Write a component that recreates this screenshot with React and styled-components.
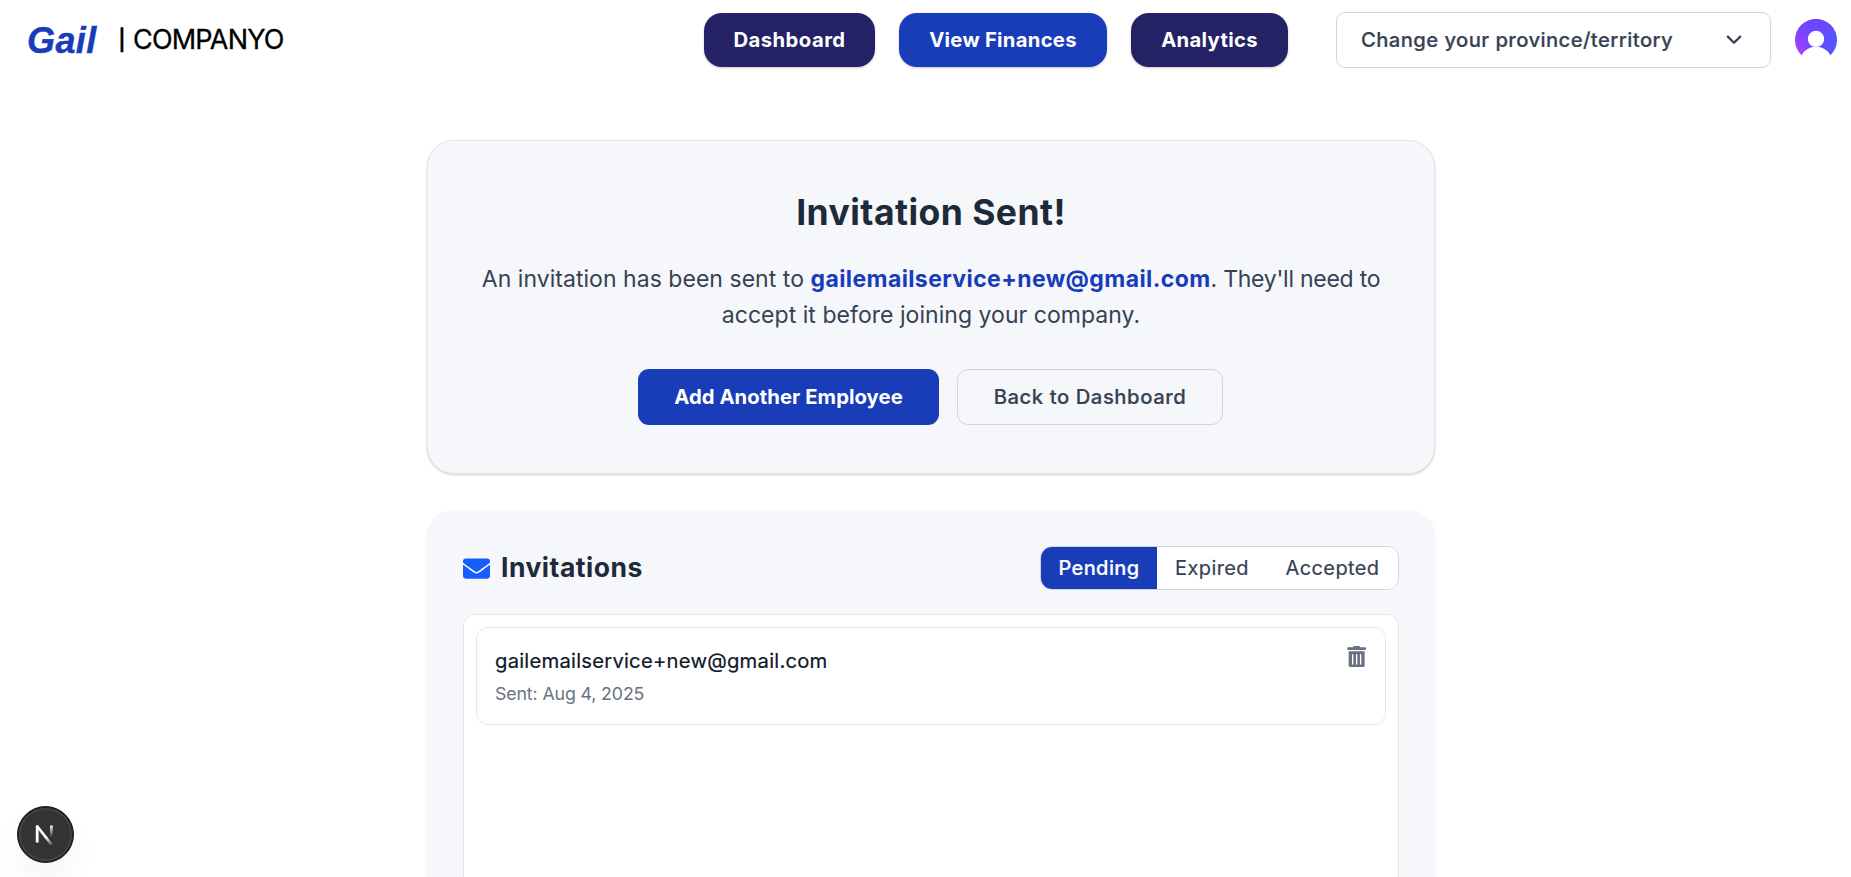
import React, { useState } from "react";
import styled, { createGlobalStyle } from "styled-components";
import { FaEnvelope, FaTrashAlt } from "react-icons/fa";

const GlobalStyle = createGlobalStyle`
  *, *::before, *::after { box-sizing: border-box; }
  html, body { margin: 0; height: 877px; overflow: hidden; background: #ffffff; }
  body { font-family: Inter, "Liberation Sans", sans-serif; color: #1e2939; }
  button { font-family: inherit; margin: 0; cursor: pointer; }
`;

const Page = styled.div`
  height: 877px;
  overflow: hidden;
`;

const Header = styled.header`
  display: flex;
  align-items: center;
  height: 80px;
  padding: 0 14px 0 27px;
`;

const Brand = styled.div`
  display: flex;
  align-items: center;
  flex: 1;
`;

const Logo = styled.span`
  width: 90px;
  padding-top: 1px;
  font: italic 700 36px/40px "Liberation Sans", sans-serif;
  letter-spacing: 0.4px;
  color: #193cb8;
  -webkit-text-stroke: 0.4px #193cb8;
`;

const Company = styled.span`
  display: flex;
  align-items: center;
  gap: 7px;
  font-size: 27px;
  line-height: 40px;
  letter-spacing: -0.8px;
  color: #000000;
  -webkit-text-stroke: 0.3px #000000;
`;

const Divider = styled.span`
  width: 9px;
  font-size: 20.5px;
  font-weight: 600;
  line-height: 40px;
  text-align: center;
`;

const Nav = styled.nav`
  display: flex;
  gap: 24px;
  margin-right: 48px;
`;

const NavButton = styled.button`
  width: ${(p) => p.$width}px;
  height: 54px;
  padding: 0 0 2px;
  border: 0;
  border-radius: 18px;
  background: ${(p) => (p.$active ? "#193cb8" : "#242165")};
  color: #ffffff;
  font-size: 20.25px;
  font-weight: 700;
  letter-spacing: ${(p) => p.$spacing}px;
  white-space: nowrap;
  box-shadow: 0 1px 3px rgba(0, 0, 0, 0.12), 0 1px 2px rgba(0, 0, 0, 0.1);
`;

const ProvinceSelect = styled.button`
  display: flex;
  align-items: center;
  justify-content: space-between;
  width: 435px;
  height: 56px;
  margin-right: 24px;
  padding: 0 28px 2px 24px;
  border: 1px solid #d1d5dc;
  border-radius: 9px;
  background: #ffffff;
  color: #364153;
  font-size: 20.25px;
  font-weight: 500;
  letter-spacing: 0.41px;
  -webkit-text-stroke: 0.2px #364153;
`;

const Avatar = styled.svg`
  display: block;
  width: 42px;
  height: 42px;
`;

const Main = styled.main`
  display: flex;
  flex-direction: column;
  gap: 36px;
  width: 1008px;
  margin: 60px 0 0 427px;
`;

const ConfirmationCard = styled.section`
  height: 334px;
  padding: 55px 53px 0;
  border: 1px solid #e5e7eb;
  border-radius: 27px;
  background: #f5f7fb;
  text-align: center;
  box-shadow: 0 1px 3px rgba(0, 0, 0, 0.1), 0 1px 2px rgba(0, 0, 0, 0.1);
`;

const Title = styled.h1`
  margin: 0 0 31px;
  font-size: 35.5px;
  font-weight: 700;
  line-height: 34px;
  letter-spacing: 0.45px;
`;

const Message = styled.p`
  margin: 0 -10px 36px;
  color: #364153;
  font-size: 23px;
  line-height: 36px;
  letter-spacing: 0.04px;
`;

const Recipient = styled.strong`
  color: #193cb8;
  font-weight: 700;
  letter-spacing: 0.39px;
`;

const Tail = styled.span`
  letter-spacing: -0.25px;
`;

const Actions = styled.div`
  display: flex;
  justify-content: center;
  gap: 18px;
  margin-right: 2px;
`;

const ActionButton = styled.button`
  width: ${(p) => (p.$primary ? 301 : 266)}px;
  height: 56px;
  padding: 0 0 1px 1px;
  border: ${(p) => (p.$primary ? "0" : "1px solid #d1d5dc")};
  border-radius: 11px;
  background: ${(p) => (p.$primary ? "#193cb8" : "transparent")};
  color: ${(p) => (p.$primary ? "#ffffff" : "#364153")};
  font-size: 20.25px;
  font-weight: ${(p) => (p.$primary ? 700 : 500)};
  letter-spacing: ${(p) => (p.$primary ? 0.06 : 0.56)}px;
  -webkit-text-stroke: ${(p) => (p.$primary ? "0" : "0.2px #364153")};
`;

const InvitationsCard = styled.section`
  height: 500px;
  padding: 36px;
  border-radius: 27px;
  background: #f5f7fb;
  box-shadow: 0 1px 3px rgba(0, 0, 0, 0.06), 0 1px 2px rgba(0, 0, 0, 0.04);
`;

const CardHeader = styled.div`
  display: flex;
  align-items: center;
  justify-content: space-between;
  height: 44px;
  margin-bottom: 24px;
`;

const Heading = styled.h2`
  display: flex;
  align-items: center;
  gap: 11px;
  margin: 0;
  font-size: 26.5px;
  font-weight: 700;
  line-height: 36px;
  letter-spacing: 0.5px;

  svg { color: #155dfc; }
  span { padding-bottom: 2px; }
`;

const Tabs = styled.div`
  display: flex;
  height: 44px;
  border: 1px solid #d1d5dc;
  border-radius: 12px;
  overflow: hidden;
  background: #ffffff;
`;

const Tab = styled.button`
  width: ${(p) => p.$width}px;
  padding: 0;
  border: 0;
  background: ${(p) => (p.$active ? "#193cb8" : "#ffffff")};
  color: ${(p) => (p.$active ? "#ffffff" : "#364153")};
  font-size: 20px;
  font-weight: ${(p) => (p.$active ? 500 : 400)};
  letter-spacing: 0.4px;
  -webkit-text-stroke: 0.2px currentColor;
`;

const List = styled.div`
  height: 430px;
  padding: 12px;
  border: 1px solid #e5e7eb;
  border-radius: 12px;
  background: #ffffff;
`;

const Item = styled.article`
  display: flex;
  justify-content: space-between;
  align-items: flex-start;
  height: 98px;
  padding: 17px 18px;
  border: 1px solid #e5e7eb;
  border-radius: 12px;
`;

const Email = styled.div`
  color: #101828;
  font-size: 20.25px;
  line-height: 32px;
  letter-spacing: 0.22px;
  -webkit-text-stroke: 0.2px #101828;
`;

const SentDate = styled.div`
  color: #6a7282;
  font-size: 17.8px;
  line-height: 33px;
  letter-spacing: -0.14px;
`;

const DeleteButton = styled.button`
  display: flex;
  padding: 1px 0 0;
  border: 0;
  background: none;
  color: #6a7282;
`;

const DevBadge = styled.div`
  position: fixed;
  left: 16.5px;
  bottom: 14.5px;
  display: grid;
  place-items: center;
  width: 57px;
  height: 57px;
  border-radius: 50%;
  border: 1px solid #1a1a1a;
  background: #333333;
  box-shadow: inset 0 0 0 1px #1d1d1d, inset 0 0 0 2.5px #484848, 0 18px 36px -4px rgba(0, 0, 0, 0.06);
`;

const TABS = [
  { name: "Pending", width: 116 },
  { name: "Expired", width: 110 },
  { name: "Accepted", width: 131 },
];

function UserAvatar() {
  return (
    <Avatar viewBox="0 0 42 42">
      <defs>
        <linearGradient id="avatar-fill" x1="0" y1="0.75" x2="1" y2="0.45">
          <stop offset="0.05" stopColor="#a142fb" />
          <stop offset="0.5" stopColor="#6b47fd" />
          <stop offset="1" stopColor="#4b5bff" />
        </linearGradient>
        <linearGradient id="avatar-top" x1="0" y1="0" x2="0" y2="1">
          <stop offset="0" stopColor="#6c47ff" />
          <stop offset="0.6" stopColor="#6c47ff" stopOpacity="0" />
        </linearGradient>
        <clipPath id="avatar-clip">
          <path d="M6.6 36.3A21 21 0 1 1 35.4 36.3A16.4 16.4 0 0 0 6.6 36.3Z" />
        </clipPath>
      </defs>
      <g clipPath="url(#avatar-clip)">
        <rect width="42" height="42" fill="url(#avatar-fill)" />
        <rect width="42" height="42" fill="url(#avatar-top)" />
        <circle cx="21" cy="20" r="8.2" fill="#ffffff" />
      </g>
    </Avatar>
  );
}

function Chevron() {
  return (
    <svg width="16" height="10" viewBox="0 0 16 10" fill="none">
      <path d="M1.8 2.6 8 8.8l6.2-6.2" stroke="#364153" strokeWidth="2.2" strokeLinecap="round" strokeLinejoin="round" />
    </svg>
  );
}

function NextMark() {
  return (
    <svg width="22" height="24" viewBox="0 0 22 24" fill="none">
      <defs>
        <linearGradient id="mark-diagonal" x1="10" y1="12" x2="18" y2="22" gradientUnits="userSpaceOnUse">
          <stop offset="0.3" stopColor="#ffffff" />
          <stop offset="1" stopColor="#ffffff" stopOpacity="0.2" />
        </linearGradient>
        <linearGradient id="mark-stem" x1="0" y1="3" x2="0" y2="15" gradientUnits="userSpaceOnUse">
          <stop offset="0" stopColor="#ffffff" />
          <stop offset="1" stopColor="#ffffff" stopOpacity="0" />
        </linearGradient>
      </defs>
      <path d="M3.2 20.5V3.5" stroke="#ffffff" strokeWidth="2.8" />
      <path d="M2.8 3.8 17.6 22.6" stroke="url(#mark-diagonal)" strokeWidth="2.6" />
      <path d="M17.4 3.5V15" stroke="url(#mark-stem)" strokeWidth="2.8" />
    </svg>
  );
}

export default function App() {
  const [tab, setTab] = useState("Pending");
  return (
    <Page>
      <GlobalStyle />
      <Header>
        <Brand>
          <Logo>Gail</Logo>
          <Company>
            <Divider>|</Divider>
            <span>COMPANYO</span>
          </Company>
        </Brand>
        <Nav>
          <NavButton $width={171} $spacing={0.47}>Dashboard</NavButton>
          <NavButton $width={208} $spacing={0.27} $active>View Finances</NavButton>
          <NavButton $width={157} $spacing={0.31}>Analytics</NavButton>
        </Nav>
        <ProvinceSelect>
          Change your province/territory
          <Chevron />
        </ProvinceSelect>
        <UserAvatar />
      </Header>
      <Main>
        <ConfirmationCard>
          <Title>Invitation Sent!</Title>
          <Message>
            An invitation has been sent to <Recipient>gailemailservice+new@gmail.com</Recipient>
            <Tail>. They'll need to</Tail>
            <br />
            accept it before joining your company.
          </Message>
          <Actions>
            <ActionButton $primary>Add Another Employee</ActionButton>
            <ActionButton>Back to Dashboard</ActionButton>
          </Actions>
        </ConfirmationCard>
        <InvitationsCard>
          <CardHeader>
            <Heading>
              <FaEnvelope size={27} />
              <span>Invitations</span>
            </Heading>
            <Tabs>
              {TABS.map(({ name, width }) => (
                <Tab key={name} $width={width} $active={tab === name} onClick={() => setTab(name)}>
                  {name}
                </Tab>
              ))}
            </Tabs>
          </CardHeader>
          <List>
            <Item>
              <div>
                <Email>gailemailservice+new@gmail.com</Email>
                <SentDate>Sent: Aug 4, 2025</SentDate>
              </div>
              <DeleteButton aria-label="Delete invitation">
                <FaTrashAlt size={21.3} />
              </DeleteButton>
            </Item>
          </List>
        </InvitationsCard>
      </Main>
      <DevBadge>
        <NextMark />
      </DevBadge>
    </Page>
  );
}
